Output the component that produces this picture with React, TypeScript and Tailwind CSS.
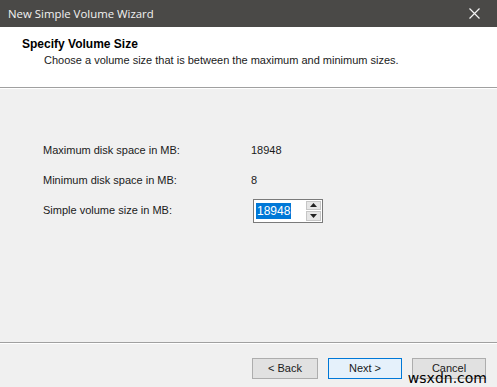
import React from 'react';

const FONT = { fontFamily: '"Liberation Sans", Arial, sans-serif' };

function SpinBox() {
  return (
    <div className="flex items-stretch h-[24px] border border-[#7a7a7a] bg-white w-[70px]">
      <div className="flex-1 flex items-center pl-[2px]">
        <span className="bg-[#0078d7] text-white px-[1px] leading-[16px] text-[12px]">18948</span>
      </div>
      <div className="flex flex-col justify-center gap-[1px] pr-[1px] py-[1px]">
        <div className="w-[15px] h-[10px] bg-[#e6e6e6] border border-[#c6c6c6] flex items-center justify-center">
          <svg width="7" height="4" viewBox="0 0 7 4"><path d="M0 4 L3.5 0 L7 4 Z" fill="#222" /></svg>
        </div>
        <div className="w-[15px] h-[10px] bg-[#e6e6e6] border border-[#c6c6c6] flex items-center justify-center">
          <svg width="7" height="4" viewBox="0 0 7 4"><path d="M0 0 L7 0 L3.5 4 Z" fill="#222" /></svg>
        </div>
      </div>
    </div>
  );
}

export default function App() {
  return (
    <div className="w-[497px] h-[387px] flex flex-col bg-[#f0f0f0] text-[11px] text-[#1a1a1a] relative overflow-hidden" style={FONT}>
      {/* Title bar */}
      <div className="h-[27px] bg-[#4a4947] flex items-center justify-between text-[#f2f2f2] shrink-0">
        <span className="pl-[8px] text-[11.4px]" style={{ fontFamily: '"Open Sans", "Noto Sans", sans-serif' }}>New Simple Volume Wizard</span>
        <div className="w-[46px] h-full flex items-center justify-center">
          <svg width="11" height="11" viewBox="0 0 11 11"><path d="M0.5 0.5 L10.5 10.5 M10.5 0.5 L0.5 10.5" stroke="#f5f5f5" strokeWidth="1.2" /></svg>
        </div>
      </div>

      {/* Header */}
      <div className="h-[60px] bg-white shrink-0 pl-[22px] pt-[10px]">
        <div className="font-bold text-[12px] leading-[15px] text-black">Specify Volume Size</div>
        <div className="pl-[22px] leading-[15px] mt-[1px]">Choose a volume size that is between the maximum and minimum sizes.</div>
      </div>
      <div className="h-px bg-[#a0a0a0] shrink-0" />
      <div className="h-px bg-white shrink-0" />

      {/* Body */}
      <div className="flex-1 pl-[43px] pt-[46px]">
        <div className="grid grid-cols-[208px_auto] auto-rows-[30px] items-center">
          <span>Maximum disk space in MB:</span>
          <span>18948</span>
          <span>Minimum disk space in MB:</span>
          <span>8</span>
          <span>Simple volume size in MB:</span>
          <div className="ml-[2px] mt-[1px]"><SpinBox /></div>
        </div>
      </div>

      {/* Footer */}
      <div className="h-px bg-[#a0a0a0] shrink-0" />
      <div className="h-px bg-white shrink-0" />
      <div className="h-[43px] shrink-0 flex justify-end items-start pt-[14px] pr-[11px] gap-[10px]">
        <button className="w-[66px] h-[21px] bg-[#e1e1e1] border border-[#adadad]">&lt; Back</button>
        <button className="w-[74px] h-[21px] bg-[#e5f1fb] border border-[#0078d7]">Next &gt;</button>
        <button className="w-[74px] h-[21px] bg-[#e1e1e1] border border-[#adadad]">Cancel</button>
      </div>

      <span className="absolute right-[10px] bottom-[2px] text-[14px] text-black leading-none" style={{ fontFamily: '"DejaVu Sans", sans-serif' }}>wsxdn.com</span>
    </div>
  );
}
